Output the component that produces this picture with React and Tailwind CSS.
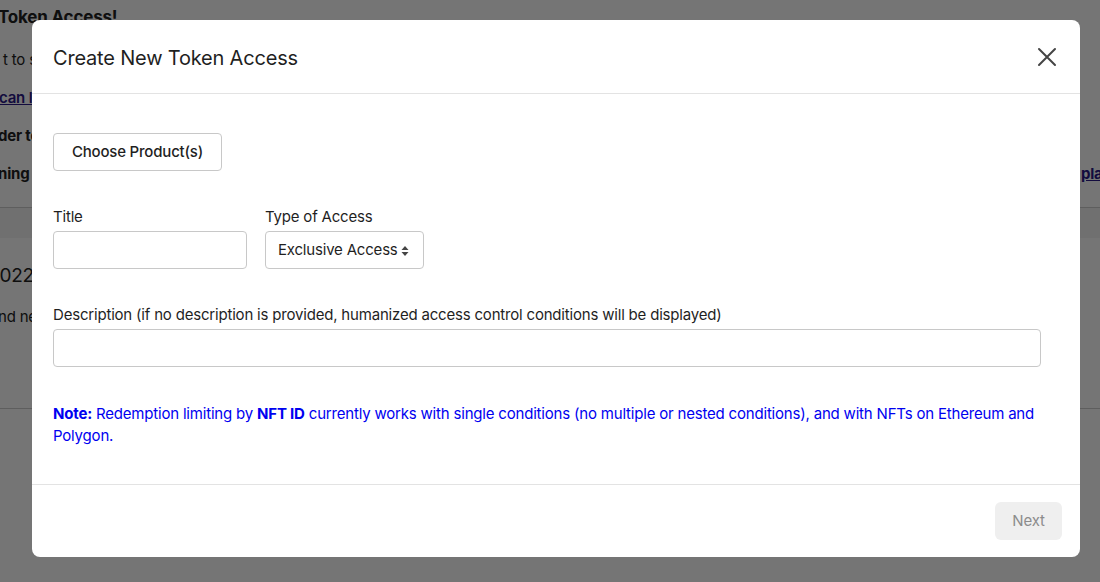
import React from "react";

function CloseIcon() {
  return (
    <svg width="20" height="20" viewBox="0 0 20 20" fill="none" stroke="#444" strokeWidth="2" strokeLinecap="round">
      <path d="M2 2 L18 18 M18 2 L2 18" />
    </svg>
  );
}

function SortIcon() {
  return (
    <svg width="8" height="12" viewBox="0 0 8 12" fill="#444">
      <path d="M4 1 L7.5 5 H0.5 Z" />
      <path d="M4 11 L7.5 7 H0.5 Z" />
    </svg>
  );
}

export default function App() {
  return (
    <div
      className="relative w-[1100px] h-[582px] overflow-hidden bg-white text-[#222] tracking-[-0.012em]"
      style={{ fontFamily: "Inter, 'Noto Sans', sans-serif" }}
    >
      {/* underlying page */}
      <div className="flex flex-col">
        <div className="flex flex-col -mt-[1px]">
          <div className="h-[38px] flex items-center text-[17px] font-bold -ml-[2px] whitespace-nowrap">Token Access!</div>
          <div className="h-[4px]" />
          <div className="h-[38px] flex items-center text-[15px] ml-[3px] whitespace-nowrap">t to share your exclusive content</div>
          <div className="h-[38px] flex items-center text-[15px] font-semibold text-[#2b1a87] underline -ml-[1px] whitespace-nowrap">can learn more</div>
          <div className="h-[38px] flex items-center text-[15px] font-bold -ml-[2px] whitespace-nowrap">der to access the content</div>
          <div className="h-[38px] flex items-center justify-between text-[15px] font-bold whitespace-nowrap">
            <span className="-ml-[2px]">ning</span>
            <span className="text-[#2b1a87] underline mr-[-20px]">place</span>
          </div>
          <div className="h-[14px]" />
        </div>
        <div className="h-[31px] border-t border-[#ccc] bg-[#f4f4f4]" />
        <div className="h-[171px] border-b border-[#ccc] flex flex-col">
          <div className="mt-[25px] h-[26px] flex items-center text-[19px] -ml-[12px] whitespace-nowrap">2022</div>
          <div className="mt-[17px] h-[22px] flex items-center text-[15px] -ml-[2px] whitespace-nowrap">nd new</div>
        </div>
        <div className="flex-1 h-[200px] bg-[#f4f4f4]" />
      </div>

      {/* overlay */}
      <div className="absolute inset-0 bg-black/[0.54]" />

      {/* modal */}
      <div className="absolute left-[32px] top-[20px] w-[1048px] h-[537px] bg-white rounded-[8px] flex flex-col text-[#1f1f1f]">
        <div className="h-[74px] shrink-0 border-b border-[#e3e3e3] flex items-center justify-between pl-[21px] pr-[23px]">
          <h2 className="text-[20px] leading-[26px] pt-[2px]">Create New Token Access</h2>
          <button className="w-[20px] h-[20px] flex items-center justify-center">
            <CloseIcon />
          </button>
        </div>

        <div className="flex-1 flex flex-col pl-[21px] pr-[39px] pt-[39px]">
          <button className="self-start h-[38px] w-[169px] border border-[#c8c8c8] rounded-[4px] text-[15px] font-medium text-[#1f1f1f] bg-white pt-[1px]">
            Choose Product(s)
          </button>

          <div className="flex gap-[18px] mt-[35px]">
            <div className="flex flex-col gap-[5px]">
              <label className="text-[15px] leading-[20px] pt-[1px] -mb-[1px]">Title</label>
              <div className="w-[194px] h-[38px] border border-[#c8c8c8] rounded-[4px]" />
            </div>
            <div className="flex flex-col gap-[5px]">
              <label className="text-[15px] leading-[20px] pt-[1px] -mb-[1px]">Type of Access</label>
              <div className="w-[159px] h-[38px] border border-[#c8c8c8] rounded-[4px] flex items-center justify-between pl-[12px] pr-[14px] text-[15px] pt-[1px]">
                <span>Exclusive Access</span>
                <SortIcon />
              </div>
            </div>
          </div>

          <div className="flex flex-col gap-[5px] mt-[35px]">
            <label className="text-[15px] leading-[20px] pt-[1px] -mb-[1px]">
              Description (if no description is provided, humanized access control conditions will be displayed)
            </label>
            <div className="w-full h-[38px] border border-[#c8c8c8] rounded-[4px]" />
          </div>

          <p className="mt-[35px] pt-[1px] text-[15px] leading-[22px] text-[#0000f0]">
            <b>Note:</b> Redemption limiting by <b>NFT ID</b> currently works with single conditions (no multiple or nested
            conditions), and with NFTs on Ethereum and Polygon.
          </p>
        </div>

        <div className="h-[73px] shrink-0 border-t border-[#e3e3e3] flex items-center justify-end pr-[18px]">
          <button className="w-[67px] h-[38px] rounded-[6px] bg-[#efefef] text-[#8c8c8c] text-[15px] pt-[1px]">Next</button>
        </div>
      </div>
    </div>
  );
}
